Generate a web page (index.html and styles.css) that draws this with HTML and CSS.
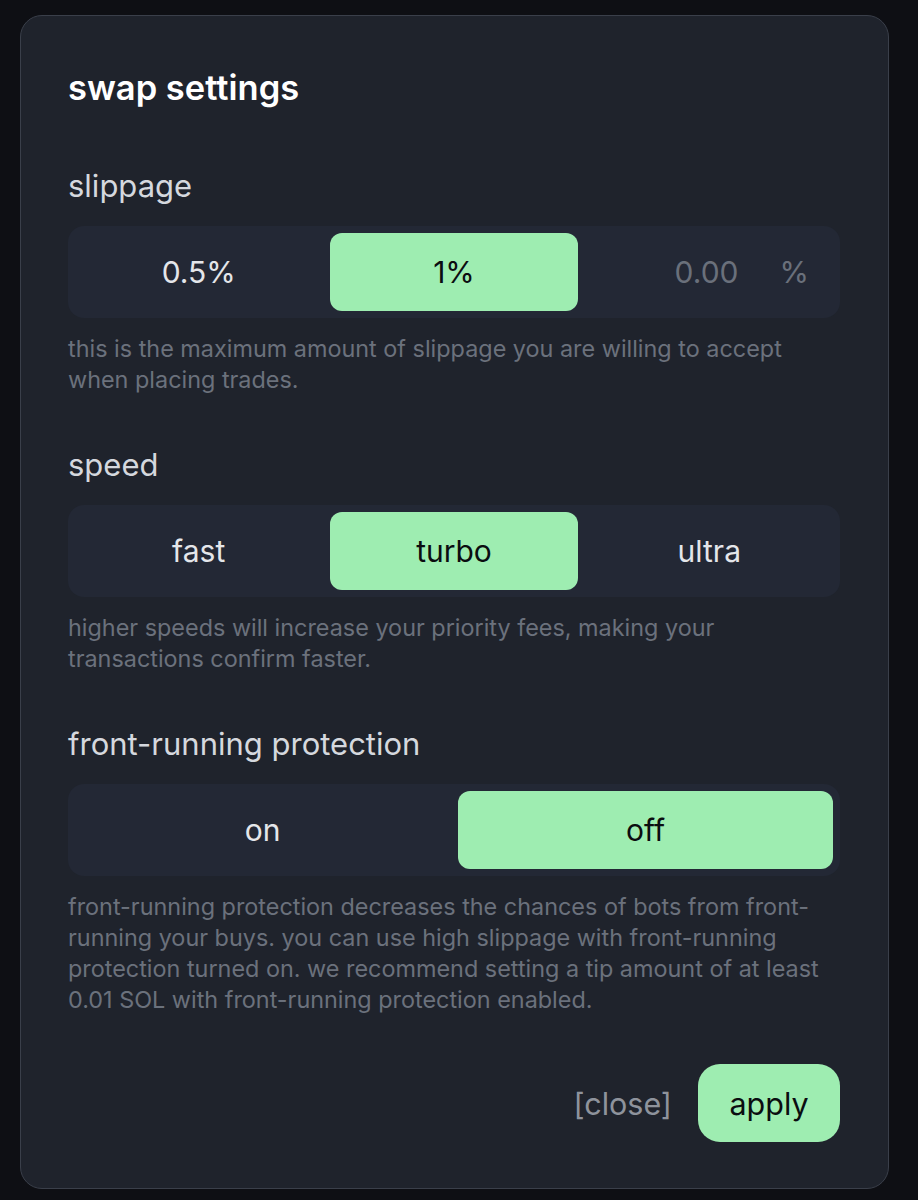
FILE: index.html
```html
<!DOCTYPE html>
<html lang="en">
<head>
<meta charset="utf-8">
<title>swap settings</title>
<link rel="stylesheet" href="styles.css">
</head>
<body>
<div class="modal">
  <h1 class="title">swap settings</h1>

  <section class="section">
    <h2 class="label">slippage</h2>
    <div class="seg seg-3">
      <button class="opt">0.5%</button>
      <button class="opt active">1%</button>
      <div class="custom"><span class="ph">0.00</span><span class="pct">%</span></div>
    </div>
    <p class="desc">this is the maximum amount of slippage you are willing to accept when placing trades.</p>
  </section>

  <section class="section">
    <h2 class="label">speed</h2>
    <div class="seg seg-3">
      <button class="opt">fast</button>
      <button class="opt active">turbo</button>
      <button class="opt">ultra</button>
    </div>
    <p class="desc">higher speeds will increase your priority fees, making your transactions confirm faster.</p>
  </section>

  <section class="section">
    <h2 class="label">front-running protection</h2>
    <div class="seg seg-2">
      <button class="opt">on</button>
      <button class="opt active">off</button>
    </div>
    <p class="desc">front-running protection decreases the chances of bots from front-running your buys. you can use high slippage with front-running protection turned on. we recommend setting a tip amount of at least 0.01 SOL with front-running protection enabled.</p>
  </section>

  <div class="footer">
    <button class="close">[close]</button>
    <button class="apply">apply</button>
  </div>
</div>
</body>
</html>
```

FILE: styles.css
```css
html, body {
  margin: 0;
  padding: 0;
  background: #0e0f14;
  font-family: Inter, "Noto Sans", "Liberation Sans", sans-serif;
}
body {
  padding: 15px 29px 12px 20px;
}
.modal {
  background: #1f232c;
  border: 1px solid #3a3f4a;
  border-radius: 22px;
  padding: 52px 48px 46px 47px;
}
.title {
  margin: 0;
  color: #ffffff;
  font-size: 34.5px;
  font-weight: 600;
  line-height: 40px;
}
.section {
  margin-top: 61px;
}
.section + .section {
  margin-top: 53px;
}
.label {
  margin: 0;
  color: #d5d8de;
  font-size: 31px;
  font-weight: 400;
  line-height: 34px;
}
.seg {
  margin-top: 23px;
  display: grid;
  gap: 8px;
  padding: 7px;
  background: #232835;
  border-radius: 16px;
}
.seg-3 { grid-template-columns: 1fr 1fr 1fr; }
.seg-2 { grid-template-columns: 1fr 1fr; }
.opt {
  height: 78px;
  border: 0;
  background: transparent;
  border-radius: 12px;
  color: #e4e6ea;
  font-family: inherit;
  font-size: 30px;
  font-weight: 400;
  padding: 0;
}
.opt.active {
  background: #9eedb1;
  color: #0b0d10;
}
.custom {
  display: flex;
  align-items: center;
  justify-content: flex-end;
  gap: 41px;
  padding-right: 24px;
  color: #6a707b;
  font-size: 30px;
}
.desc {
  margin: 15px 0 0;
  color: #6b717c;
  font-size: 23.4px;
  line-height: 31px;
}
.footer {
  margin-top: 49px;
  display: flex;
  justify-content: flex-end;
  align-items: center;
  gap: 26px;
}
.close {
  border: 0;
  background: transparent;
  padding: 0;
  color: #8e939c;
  font-family: inherit;
  font-size: 30.5px;
}
.apply {
  height: 78px;
  width: 142px;
  border: 0;
  border-radius: 22px;
  background: #9eedb1;
  color: #0b0d10;
  font-family: inherit;
  font-size: 30.5px;
  padding: 0;
}
```
